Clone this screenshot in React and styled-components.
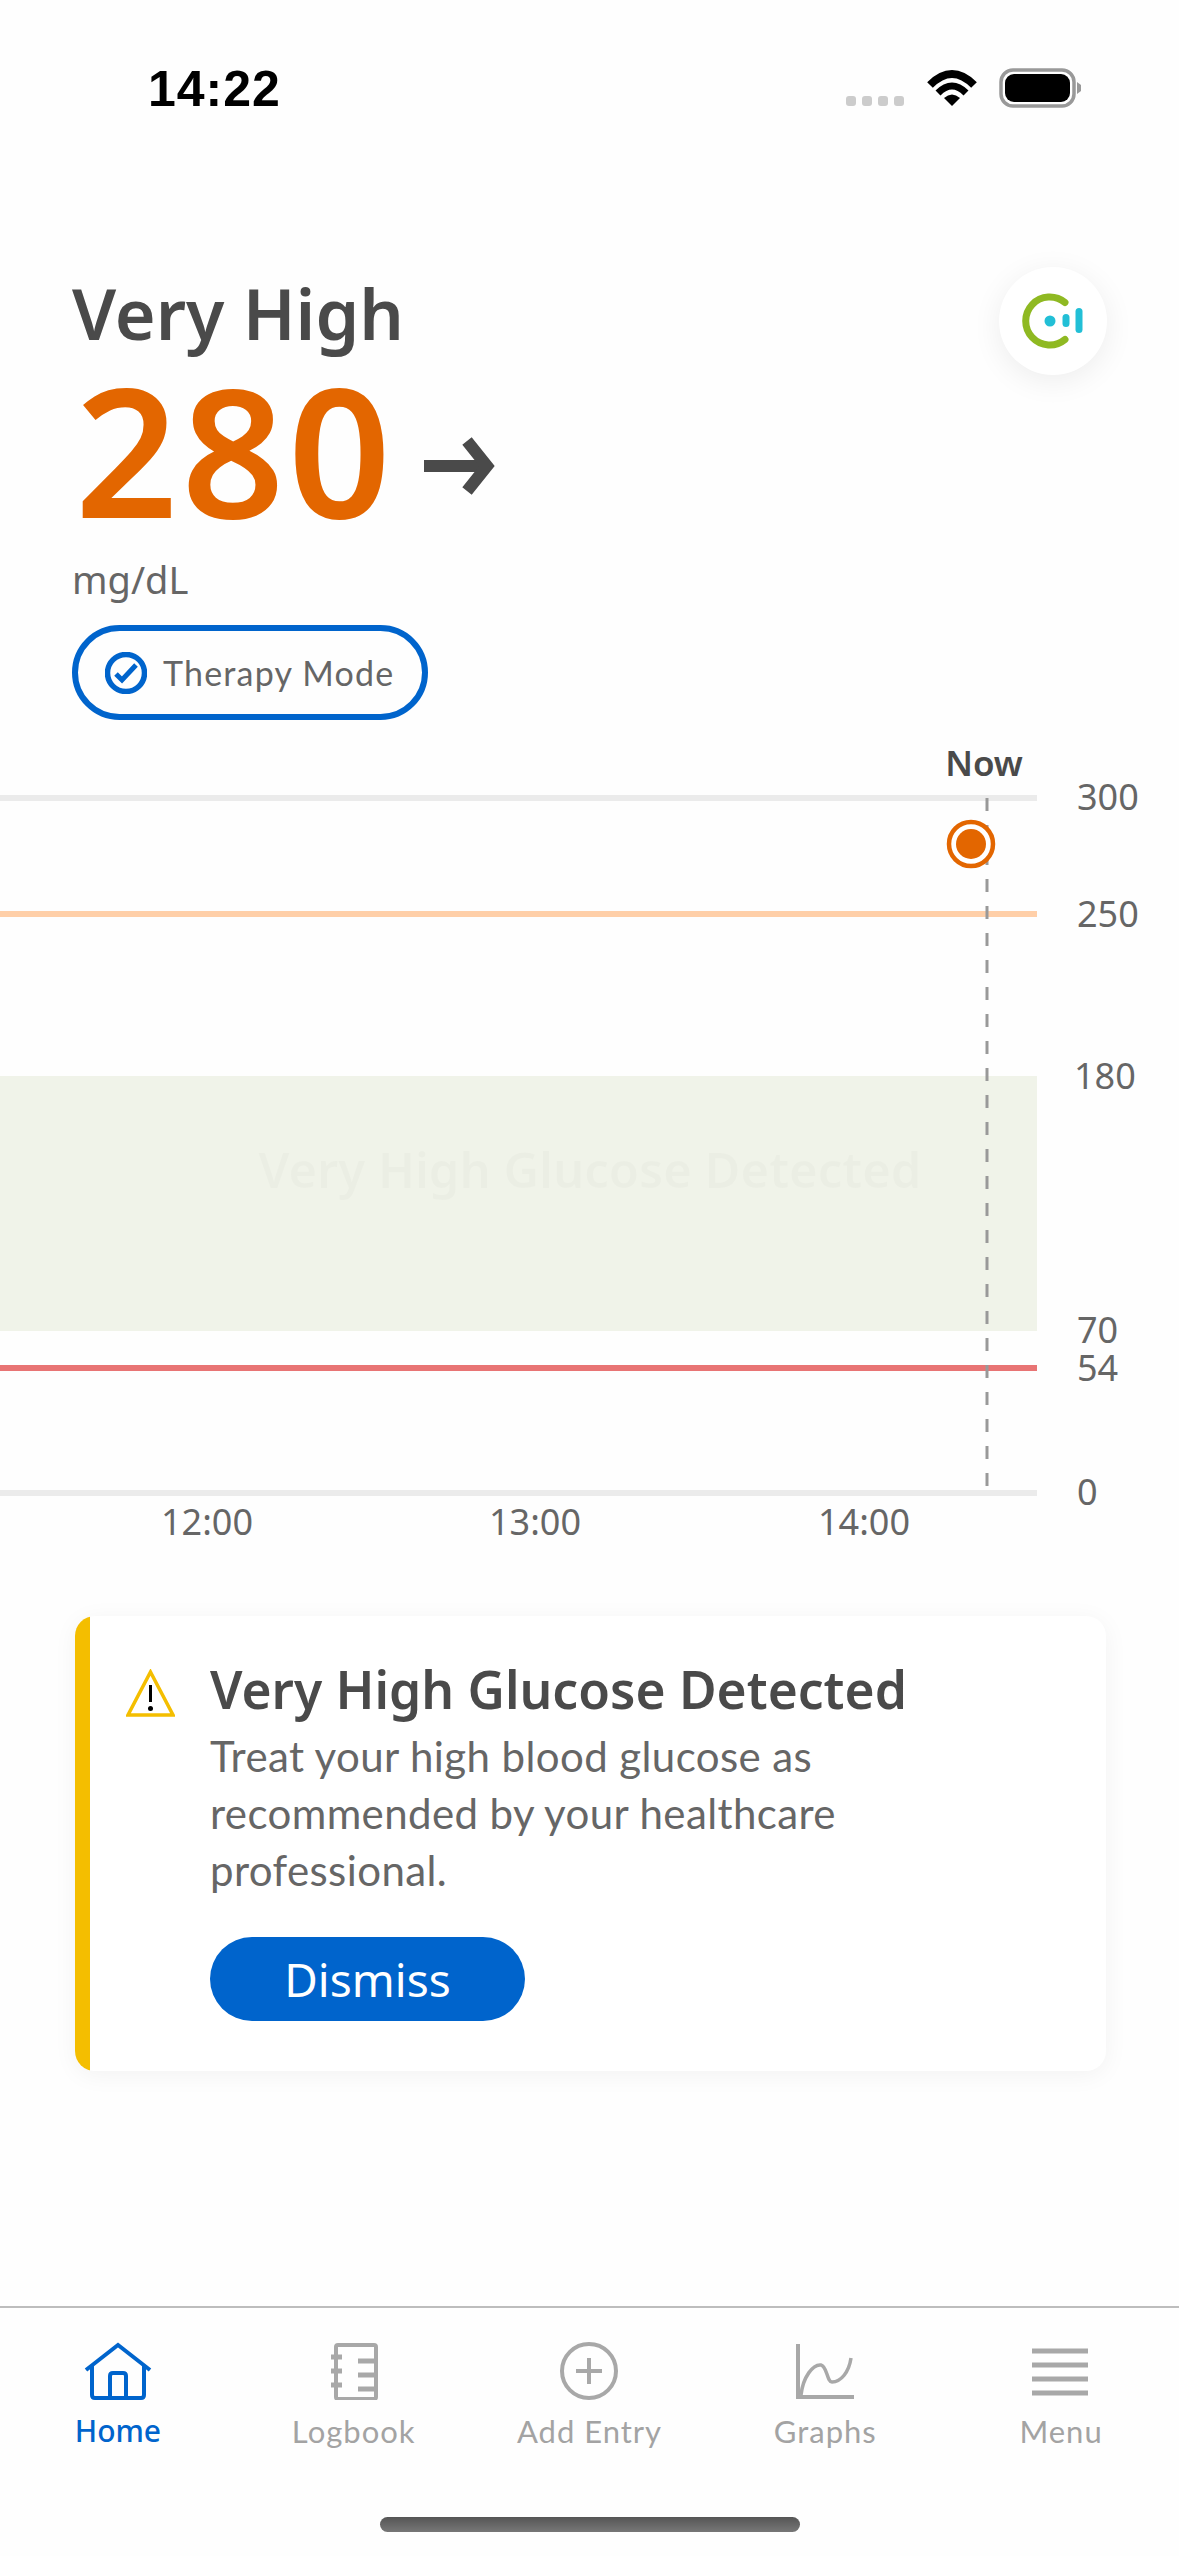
import styled, { createGlobalStyle } from "styled-components";

const BLUE = "#0064cc";
const ORANGE = "#e36600";
const DARK = "#4a4a4a";
const BODY = "#666666";
const MUTED = "#a3a3a3";
const FONT = `"Noto Sans", "Open Sans", sans-serif`;
const TEXT_FONT = `"Lato", "Noto Sans", sans-serif`;

const GlobalStyle = createGlobalStyle`
  html, body {
    margin: 0;
    padding: 0;
    background: #ffffff;
  }
  * {
    box-sizing: border-box;
  }
`;

const Page = styled.div`
  width: 1179px;
  height: 2556px;
  display: flex;
  flex-direction: column;
  overflow: hidden;
  background: #fefefe;
  font-family: ${FONT};
`;

const StatusBar = styled.div`
  height: 130px;
  padding: 64px 98px 0 148px;
  display: flex;
  justify-content: space-between;
  align-items: flex-start;
`;

const Clock = styled.span`
  font-family: "Liberation Sans", sans-serif;
  font-weight: 700;
  font-size: 50px;
  line-height: 50px;
  letter-spacing: 1px;
  color: #000000;
`;

const StatusIcons = styled.div`
  display: flex;
  align-items: flex-start;
  margin-top: 4px;
`;

const SignalDots = styled.div`
  display: flex;
  gap: 6px;
  margin: 28px 23px 0 0;
`;

const SignalDot = styled.span`
  width: 10px;
  height: 10px;
  border-radius: 3px;
  background: #cccccc;
`;

const BatteryIcon = styled.svg`
  margin-left: 22px;
`;

const Header = styled.header`
  padding: 137px 72px 0;
  display: flex;
  justify-content: space-between;
  align-items: flex-start;
`;

const Reading = styled.div`
  display: flex;
  flex-direction: column;
  align-items: flex-start;
`;

const Status = styled.h1`
  margin: 1px 0 0;
  font-size: 70px;
  line-height: 90px;
  font-weight: 600;
  color: ${DARK};
`;

const ValueRow = styled.div`
  display: flex;
  align-items: center;
  gap: 30px;
  margin: 1px 0 0 3px;
`;

const Value = styled.span`
  font-size: 180px;
  line-height: 180px;
  font-weight: 600;
  letter-spacing: 3.5px;
  color: ${ORANGE};
`;

const TrendArrow = styled.svg`
  margin-top: 36px;
  fill: none;
  stroke: ${DARK};
  stroke-width: 12;
`;

const Unit = styled.span`
  margin-top: 15px;
  font-size: 38px;
  line-height: 50px;
  color: ${BODY};
`;

const ModePill = styled.div`
  margin-top: 21px;
  width: 356px;
  height: 95px;
  padding-left: 27px;
  display: flex;
  align-items: center;
  gap: 16px;
  border: 6px solid ${BLUE};
  border-radius: 48px;
  font-family: ${TEXT_FONT};
  font-size: 34px;
  letter-spacing: 1.2px;
  color: ${BODY};
`;

const LogoButton = styled.div`
  width: 108px;
  height: 108px;
  border-radius: 50%;
  background: #ffffff;
  box-shadow: 0 6px 30px rgba(0, 0, 0, 0.07);
`;

const Chart = styled.svg`
  display: block;
  flex: none;
  margin-top: 10px;
  font-family: ${FONT};
`;

const AxisLabel = styled.text`
  font-size: 36px;
  fill: ${BODY};
`;

const NowLabel = styled.text`
  font-size: 35px;
  font-weight: 600;
  fill: ${DARK};
`;

const GhostText = styled.text`
  font-size: ${(p) => p.$size}px;
  font-weight: ${(p) => p.$weight};
  fill: #000000;
  fill-opacity: 0.018;
`;

const AlertCard = styled.section`
  flex: none;
  margin: 56px 73px 0 75px;
  height: 455px;
  display: flex;
  overflow: hidden;
  border-radius: 20px;
  background: #ffffff;
  box-shadow: 0 4px 24px rgba(0, 0, 0, 0.05);
`;

const AlertBar = styled.div`
  flex: none;
  width: 15px;
  background: #f4be00;
`;

const AlertBody = styled.div`
  flex: 1;
  padding: 43px 0 0 36px;
  display: flex;
  gap: 35px;
  align-items: flex-start;
`;

const WarningIcon = styled.svg`
  flex: none;
  margin-top: 10px;
`;

const AlertText = styled.div`
  display: flex;
  flex-direction: column;
  align-items: flex-start;
`;

const AlertTitle = styled.h2`
  margin: 0;
  font-size: 51.5px;
  line-height: 60px;
  font-weight: 600;
  color: ${DARK};
  white-space: nowrap;
`;

const AlertMessage = styled.p`
  margin: 9px 0 0;
  font-family: ${TEXT_FONT};
  font-size: 42px;
  line-height: 57px;
  letter-spacing: 0.4px;
  color: ${BODY};
`;

const DismissButton = styled.button`
  margin-top: 38px;
  width: 315px;
  height: 84px;
  border: none;
  border-radius: 42px;
  background: ${BLUE};
  color: #ffffff;
  font-family: ${FONT};
  font-size: 46px;
`;

const TabBar = styled.nav`
  margin-top: auto;
  height: 250px;
  padding-top: 34px;
  display: grid;
  grid-template-columns: repeat(5, 1fr);
  align-items: start;
  position: relative;
  border-top: 2px solid #bdbdbd;
`;

const Tab = styled.div`
  display: flex;
  flex-direction: column;
  align-items: center;
  gap: 11px;
  font-family: ${(p) => (p.$active ? FONT : TEXT_FONT)};
  font-size: ${(p) => (p.$active ? 30 : 31)}px;
  line-height: 40px;
  letter-spacing: ${(p) => (p.$active ? 0 : 1)}px;
  font-weight: ${(p) => (p.$active ? 500 : 400)};
  color: ${(p) => (p.$active ? BLUE : MUTED)};
`;

const TabIcon = styled.svg`
  display: block;
  fill: none;
  stroke: ${(p) => (p.$active ? BLUE : "#a8a8a8")};
  stroke-width: 4;
`;

const HomeIndicator = styled.div`
  position: absolute;
  left: 380px;
  bottom: 24px;
  width: 420px;
  height: 15px;
  border-radius: 8px;
  background: linear-gradient(#555555, #777777);
`;

const yLabels = [
  { text: "300", x: 1077, y: 810 },
  { text: "250", x: 1077, y: 927 },
  { text: "180", x: 1074, y: 1089 },
  { text: "70", x: 1077, y: 1343 },
  { text: "54", x: 1077, y: 1381 },
  { text: "0", x: 1077, y: 1505 },
];

const xLabels = [
  { text: "12:00", x: 207 },
  { text: "13:00", x: 535 },
  { text: "14:00", x: 864 },
];

const ghostLines = [
  { text: "Very High Glucose Detected", y: 1188, size: 49, weight: 600 },
  { text: "Treat your high blood glucose as", y: 1248, size: 39, weight: 400 },
  { text: "recommended by your healthcare", y: 1297, size: 39, weight: 400 },
];

function GlucoseChart() {
  return (
    <Chart width="1179" height="830" viewBox="0 730 1179 830">
      <rect x="0" y="1076" width="1037" height="255" fill="#f0f3e9" />
      {ghostLines.map((l) => (
        <GhostText key={l.y} x="590" y={l.y} textAnchor="middle" $size={l.size} $weight={l.weight}>
          {l.text}
        </GhostText>
      ))}
      <rect x="0" y="795" width="1037" height="6" fill="#ebebeb" />
      <rect x="0" y="911" width="1037" height="6" fill="#ffcfa8" />
      <rect x="0" y="1365" width="1037" height="6" fill="#e87474" />
      <rect x="0" y="1490" width="1037" height="6" fill="#ebebeb" />
      <line x1="987" y1="798" x2="987" y2="1487" stroke="#999999" strokeWidth="3" strokeDasharray="13 14" />
      <circle cx="971" cy="844" r="22" fill="#ffffff" stroke={ORANGE} strokeWidth="4.5" />
      <circle cx="971" cy="844" r="15" fill={ORANGE} />
      <NowLabel x="984" y="776" textAnchor="middle">Now</NowLabel>
      {yLabels.map((l) => (
        <AxisLabel key={l.text} x={l.x} y={l.y}>{l.text}</AxisLabel>
      ))}
      {xLabels.map((l) => (
        <AxisLabel key={l.text} x={l.x} y="1535" textAnchor="middle">{l.text}</AxisLabel>
      ))}
    </Chart>
  );
}

export default function App() {
  return (
    <Page>
      <GlobalStyle />
      <StatusBar>
        <Clock>14:22</Clock>
        <StatusIcons>
          <SignalDots>
            <SignalDot />
            <SignalDot />
            <SignalDot />
            <SignalDot />
          </SignalDots>
          <svg width="50" height="38" viewBox="0 0 50 38">
            <path d="M3 17Q25 -5 47 17" fill="none" stroke="#000" strokeWidth="8" />
            <path d="M11 25Q25 11 39 25" fill="none" stroke="#000" strokeWidth="7" />
            <path d="M17 30Q25 23 33 30L25 38Z" fill="#000" />
          </svg>
          <BatteryIcon width="82" height="40" viewBox="0 0 82 40">
            <rect x="2" y="2" width="73" height="36" rx="12" fill="#fff" stroke="#999" strokeWidth="3.5" />
            <rect x="6" y="6" width="65" height="28" rx="9" fill="#000" />
            <path d="M78 14L82 17V23L78 26Z" fill="#999" />
          </BatteryIcon>
        </StatusIcons>
      </StatusBar>

      <Header>
        <Reading>
          <Status>Very High</Status>
          <ValueRow>
            <Value>280</Value>
            <TrendArrow width="72" height="60" viewBox="0 0 72 60">
              <path d="M0 29H62" />
              <path d="M43 4L63 29L43 54" />
            </TrendArrow>
          </ValueRow>
          <Unit>mg/dL</Unit>
          <ModePill>
            <svg width="42" height="42" viewBox="0 0 42 42" fill="none" stroke={BLUE}>
              <circle cx="21" cy="21" r="18.5" strokeWidth="5.5" />
              <path d="M11 22L17 28L31 13" strokeWidth="5" />
            </svg>
            Therapy Mode
          </ModePill>
        </Reading>
        <LogoButton>
          <svg width="108" height="108" viewBox="0 0 108 108" fill="none" strokeLinecap="round">
            <path d="M66 35.5A24 24 0 1 0 66 72.5" stroke="#8fb922" strokeWidth="7" />
            <circle cx="51" cy="54" r="5.5" fill="#22bfd6" />
            <path d="M67 50.5V56.5" stroke="#22bfd6" strokeWidth="7" />
            <path d="M80 44.5V62.5" stroke="#22bfd6" strokeWidth="7" />
          </svg>
        </LogoButton>
      </Header>

      <GlucoseChart />

      <AlertCard>
        <AlertBar />
        <AlertBody>
          <WarningIcon width="49" height="48" viewBox="0 0 49 48">
            <path d="M24.5 3L47 46H2Z" fill="#fff" stroke="#f4be00" strokeWidth="3.5" />
            <path d="M24.5 16V33" stroke="#000" strokeWidth="3" />
            <circle cx="24.5" cy="39.5" r="2.5" fill="#000" />
          </WarningIcon>
          <AlertText>
            <AlertTitle>Very High Glucose Detected</AlertTitle>
            <AlertMessage>
              Treat your high blood glucose as
              <br />
              recommended by your healthcare
              <br />
              professional.
            </AlertMessage>
            <DismissButton>Dismiss</DismissButton>
          </AlertText>
        </AlertBody>
      </AlertCard>

      <TabBar>
        <Tab $active>
          <TabIcon $active width="80" height="58" viewBox="0 0 80 58">
            <path d="M8 28L40 3L72 28" />
            <path d="M14 23V53Q14 56 17 56H63Q66 56 66 53V23" />
            <path d="M32 56V34Q32 31 35 31H45Q48 31 48 34V56" />
          </TabIcon>
          Home
        </Tab>
        <Tab>
          <TabIcon width="80" height="58" viewBox="0 0 80 58">
            <path d="M24 3H60Q62 3 62 5V55Q62 57 60 57H24Q22 57 22 55V5Q22 3 24 3Z" />
            <path d="M17 15H28M17 29H28M17 43H28" strokeWidth="5" />
            <path d="M44 19H61M44 33H61M44 47H61" strokeWidth="5" />
          </TabIcon>
          Logbook
        </Tab>
        <Tab>
          <TabIcon width="80" height="58" viewBox="0 0 80 58">
            <circle cx="40" cy="29" r="27" />
            <path d="M40 16V42M27 29H53" />
          </TabIcon>
          Add Entry
        </Tab>
        <Tab>
          <TabIcon width="80" height="58" viewBox="0 0 80 58">
            <path d="M13 2V55H69" />
            <path d="M16 53C18 35 28 22 36 23C42 24 42 40 47 40C56 40 64 30 66 16" strokeWidth="3.5" />
          </TabIcon>
          Graphs
        </Tab>
        <Tab>
          <TabIcon width="80" height="58" viewBox="0 0 80 58">
            <path d="M11 9H67M11 23H67M11 37H67M11 51H67" strokeWidth="5" />
          </TabIcon>
          Menu
        </Tab>
        <HomeIndicator />
      </TabBar>
    </Page>
  );
}
